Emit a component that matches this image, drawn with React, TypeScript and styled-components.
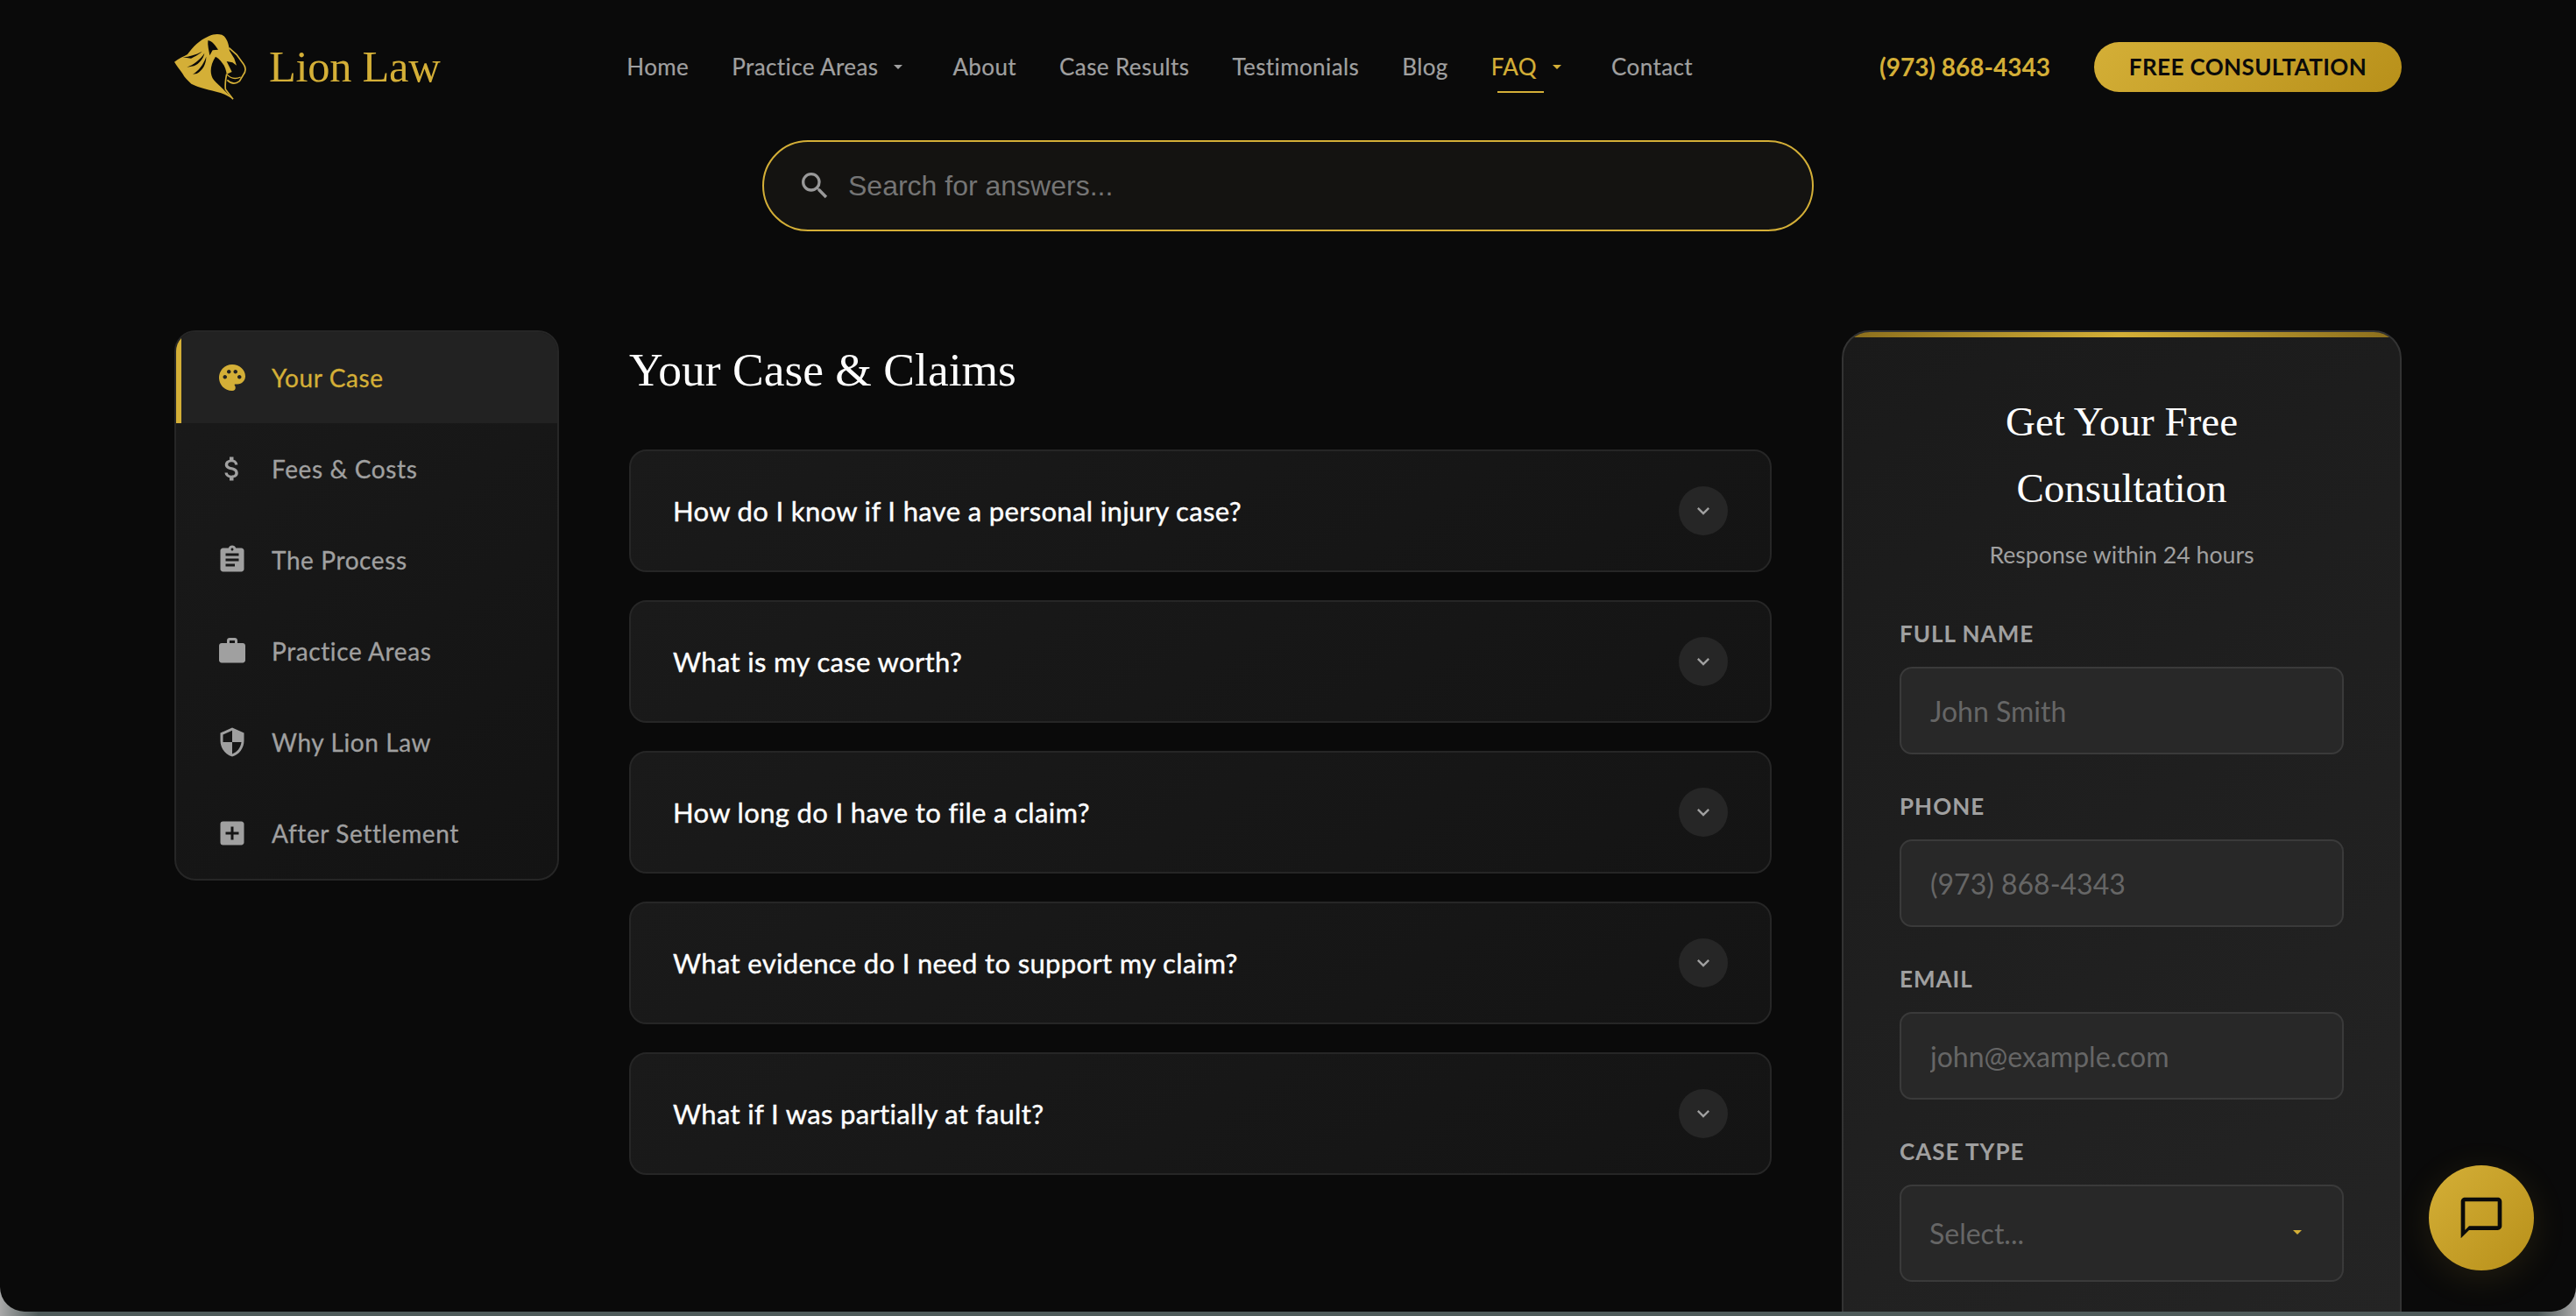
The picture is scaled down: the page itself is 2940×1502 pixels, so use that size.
import React from "react";
import styled, { createGlobalStyle } from "styled-components";
import {
    MdPalette,
    MdAttachMoney,
    MdAssignment,
    MdWork,
    MdSecurity,
    MdAddBox,
    MdSearch,
    MdExpandMore,
} from "react-icons/md";

const GOLD = "#d4af37";
const SANS = `Lato, "Noto Sans", sans-serif`;
const SERIF = `"Liberation Serif", serif`;

const navItems = [
    { label: "Home" },
    { label: "Practice Areas", caret: true },
    { label: "About" },
    { label: "Case Results" },
    { label: "Testimonials" },
    { label: "Blog" },
    { label: "FAQ", caret: true, active: true },
    { label: "Contact" },
];

const categories = [
    { label: "Your Case", icon: MdPalette, active: true },
    { label: "Fees & Costs", icon: MdAttachMoney },
    { label: "The Process", icon: MdAssignment },
    { label: "Practice Areas", icon: MdWork },
    { label: "Why Lion Law", icon: MdSecurity },
    { label: "After Settlement", icon: MdAddBox },
];

const questions = [
    "How do I know if I have a personal injury case?",
    "What is my case worth?",
    "How long do I have to file a claim?",
    "What evidence do I need to support my claim?",
    "What if I was partially at fault?",
];

const fields = [
    { label: "FULL NAME", placeholder: "John Smith" },
    { label: "PHONE", placeholder: "(973) 868-4343" },
    { label: "EMAIL", placeholder: "john@example.com" },
];

const LionLogo = () => (
    <svg width="82" height="76" viewBox="27 32 246 228" aria-hidden="true">
        {/* mane */}
        <path
            fill={GOLD}
            d="M27 130 C42 118 58 112 72 104 C90 80 112 56 145 42 C160 34 176 33 190 37 C206 46 213 66 216 92 L232 118 L240 142 L226 132 L206 128 L224 164 L206 172 C204 150 190 124 168 112 C150 140 146 170 162 192 C178 210 205 232 228 258 C212 248 198 240 185 236 C165 230 148 228 130 222 C112 216 98 212 85 205 C72 192 62 184 55 170 C44 154 34 142 27 130 Z"
        />
        {/* ear */}
        <path fill="#0a0a0a" d="M142 57 C152 56 162 66 177 88 L158 90 L148 108 C146 92 140 74 142 57 Z" />
        {/* mane slashes */}
        <path fill="#0a0a0a" d="M56 114 C78 112 100 106 122 94 C106 108 92 114 84 118 Z" />
        <path fill="#0a0a0a" d="M70 148 C92 140 116 122 130 100 C126 120 112 136 94 144 Z" />
        <path fill="#0a0a0a" d="M90 172 C110 160 126 140 136 112 C136 138 124 158 104 170 Z" />
        {/* snout and jaw lines */}
        <path
            fill="none"
            stroke={GOLD}
            strokeWidth="5"
            d="M214 82 L240 105 L264 138 C274 152 270 166 262 176 L250 196 C234 208 220 204 208 192"
        />
        <path fill="none" stroke={GOLD} strokeWidth="5" d="M206 172 C202 192 200 208 202 224 L228 258" />
        <path fill="none" stroke={GOLD} strokeWidth="4" d="M206 172 C220 188 236 190 254 182" />
    </svg>
);

const ChatIcon = () => (
    <svg width="56" height="56" viewBox="0 0 24 24" fill="#0a0a0a" aria-hidden="true">
        <path d="M20 2H4c-1.1 0-2 .9-2 2v18l4-4h14c1.1 0 2-.9 2-2V4c0-1.1-.9-2-2-2zm0 14H6l-2 2V4h16v12z" />
    </svg>
);

export default function App() {
    return (
        <>
            <GlobalStyle />
            <Screen>
                <Header>
                    <Logo>
                        <LionLogo />
                        <LogoText>Lion Law</LogoText>
                    </Logo>
                    <Nav>
                        {navItems.map((item) => (
                            <NavLink key={item.label} $active={item.active}>
                                {item.label}
                                {item.caret && <Caret />}
                            </NavLink>
                        ))}
                    </Nav>
                    <HeaderActions>
                        <Phone>(973) 868-4343</Phone>
                        <CtaButton>FREE CONSULTATION</CtaButton>
                    </HeaderActions>
                </Header>

                <SearchBar>
                    <MdSearch size={40} color="#999" />
                    <SearchInput placeholder="Search for answers..." />
                </SearchBar>

                <Content>
                    <Sidebar>
                        {categories.map(({ label, icon: Icon, active }) => (
                            <SidebarItem key={label} $active={active}>
                                <IconSlot>
                                    <Icon size={36} />
                                </IconSlot>
                                {label}
                            </SidebarItem>
                        ))}
                    </Sidebar>

                    <Main>
                        <Title>Your Case &amp; Claims</Title>
                        <Questions>
                            {questions.map((question) => (
                                <Question key={question}>
                                    {question}
                                    <Chevron>
                                        <MdExpandMore size={28} />
                                    </Chevron>
                                </Question>
                            ))}
                        </Questions>
                    </Main>

                    <FormCard>
                        <FormTitle>Get Your Free Consultation</FormTitle>
                        <FormNote>Response within 24 hours</FormNote>
                        {fields.map((field) => (
                            <Field key={field.label}>
                                <FieldLabel>{field.label}</FieldLabel>
                                <TextInput placeholder={field.placeholder} />
                            </Field>
                        ))}
                        <Field>
                            <FieldLabel>CASE TYPE</FieldLabel>
                            <SelectWrap>
                                <SelectBox defaultValue="">
                                    <option value="">Select...</option>
                                </SelectBox>
                                <SelectCaret />
                            </SelectWrap>
                        </Field>
                    </FormCard>
                </Content>

                <ChatButton aria-label="Chat">
                    <ChatIcon />
                </ChatButton>
            </Screen>
        </>
    );
}

const GlobalStyle = createGlobalStyle`
    * {
        box-sizing: border-box;
    }
    html, body {
        margin: 0;
        height: 100%;
        overflow: hidden;
        background: linear-gradient(90deg, #a8a8a8 0, #4f5b5a 44px, #4f5b5a 2896px, #a8a8a8 100%);
    }
`;

const Screen = styled.div`
    height: 1497px;
    padding: 0 199px;
    overflow: hidden;
    background: #0a0a0a;
    border-radius: 0 0 28px 28px;
    font-family: ${SANS};
`;

const Header = styled.header`
    height: 152px;
    display: flex;
    align-items: center;
    justify-content: space-between;
`;

const Logo = styled.div`
    display: flex;
    align-items: center;
    gap: 26px;
`;

const LogoText = styled.span`
    font-family: ${SERIF};
    font-size: 50.5px;
    letter-spacing: -0.3px;
    color: ${GOLD};
`;

const Nav = styled.nav`
    display: flex;
    align-items: center;
    gap: 49px;
`;

const NavLink = styled.a<{ $active?: boolean }>`
    position: relative;
    display: flex;
    align-items: center;
    gap: 18px;
    font-size: 26px;
    letter-spacing: 0.4px;
    -webkit-text-stroke: 0.2px currentColor;
    color: ${(p) => (p.$active ? GOLD : "#a0a0a0")};
    ${(p) =>
        p.$active &&
        `&::after {
            content: "";
            position: absolute;
            left: 7px;
            width: 53px;
            top: 44px;
            height: 2px;
            background: ${GOLD};
        }`}
`;

const Caret = styled.span`
    width: 0;
    height: 0;
    margin-right: 8px;
    border-left: 5px solid transparent;
    border-right: 5px solid transparent;
    border-top: 5px solid currentColor;
`;

const HeaderActions = styled.div`
    display: flex;
    align-items: center;
    gap: 50px;
`;

const Phone = styled.span`
    font-size: 28px;
    font-weight: 700;
    color: ${GOLD};
`;

const CtaButton = styled.button`
    width: 351px;
    height: 57px;
    border: 0;
    border-radius: 29px;
    background: linear-gradient(135deg, #d4af37, #b8901a);
    font-family: ${SANS};
    font-size: 26px;
    font-weight: 700;
    letter-spacing: 0.4px;
    color: #0a0a0a;
`;

const SearchBar = styled.div`
    width: 1200px;
    height: 104px;
    margin: 8px auto 0;
    padding: 0 38px;
    display: flex;
    align-items: center;
    gap: 16px;
    background: #141311;
    border: 2px solid ${GOLD};
    border-radius: 52px;
`;

const SearchInput = styled.input`
    flex: 1;
    border: 0;
    outline: 0;
    background: transparent;
    font-family: "Liberation Sans", sans-serif;
    font-size: 32px;
    color: #fff;
    &::placeholder {
        color: #757575;
    }
`;

const Content = styled.div`
    margin-top: 113px;
    display: grid;
    grid-template-columns: 439px 1fr 639px;
    column-gap: 80px;
    align-items: start;
`;

const Sidebar = styled.aside`
    overflow: hidden;
    background: linear-gradient(145deg, #1a1a1a, #131313);
    border: 2px solid #262626;
    border-radius: 24px;
`;

const SidebarItem = styled.div<{ $active?: boolean }>`
    height: 104px;
    padding-left: 40px;
    display: flex;
    align-items: center;
    gap: 27px;
    font-size: 28px;
    letter-spacing: 0.6px;
    -webkit-text-stroke: 0.3px currentColor;
    color: ${(p) => (p.$active ? GOLD : "#a0a0a0")};
    background: ${(p) => (p.$active ? "#222" : "transparent")};
    border-left: 6px solid ${(p) => (p.$active ? GOLD : "transparent")};
`;

const IconSlot = styled.span`
    width: 36px;
    display: flex;
    justify-content: center;
`;

const Main = styled.main`
    min-width: 0;
`;

const Title = styled.h2`
    margin: 0;
    height: 136px;
    padding-top: 8px;
    font-family: ${SERIF};
    font-size: 53.5px;
    font-weight: 400;
    line-height: 74px;
    color: #fff;
`;

const Questions = styled.div`
    display: flex;
    flex-direction: column;
    gap: 32px;
`;

const Question = styled.div`
    height: 140px;
    padding: 0 48px;
    display: flex;
    align-items: center;
    justify-content: space-between;
    background: linear-gradient(145deg, #1a1a1a, #141414);
    border: 2px solid #262626;
    border-radius: 20px;
    font-size: 31px;
    letter-spacing: 0.35px;
    -webkit-text-stroke: 0.4px currentColor;
    color: #fff;
`;

const Chevron = styled.span`
    width: 56px;
    height: 56px;
    display: flex;
    align-items: center;
    justify-content: center;
    border-radius: 50%;
    background: #262626;
    color: #a0a0a0;
    -webkit-text-stroke: 0;
`;

const FormCard = styled.aside`
    position: relative;
    padding: 64px 64px 0;
    overflow: hidden;
    background: linear-gradient(145deg, #1a1a1a, #242424);
    border: 2px solid #333;
    border-radius: 32px 32px 0 0;
    &::before {
        content: "";
        position: absolute;
        inset: 0 0 auto;
        height: 6px;
        background: linear-gradient(90deg, #8a6d1c, ${GOLD} 50%, #8a6d1c);
    }
`;

const FormTitle = styled.h3`
    margin: 0 auto;
    width: 340px;
    font-family: ${SERIF};
    font-size: 47px;
    font-weight: 400;
    line-height: 76px;
    text-align: center;
    color: #fff;
`;

const FormNote = styled.p`
    margin: 16px 0 48px;
    font-size: 26.7px;
    line-height: 44px;
    text-align: center;
    color: #a0a0a0;
`;

const Field = styled.div`
    margin-bottom: 39px;
`;

const FieldLabel = styled.label`
    display: block;
    margin-bottom: 18px;
    font-size: 26px;
    font-weight: 700;
    line-height: 40px;
    letter-spacing: 1px;
    color: #a0a0a0;
`;

const TextInput = styled.input`
    display: block;
    width: 100%;
    height: 100px;
    padding: 0 33px;
    outline: 0;
    background: #282828;
    border: 2px solid #3a3a3a;
    border-radius: 14px;
    font-family: ${SANS};
    font-size: 32px;
    color: #fff;
    &::placeholder {
        color: #666;
    }
`;

const SelectWrap = styled.div`
    position: relative;
`;

const SelectBox = styled.select`
    display: block;
    width: 100%;
    height: 111px;
    padding: 0 32px;
    outline: 0;
    appearance: none;
    background: #282828;
    border: 2px solid #3a3a3a;
    border-radius: 14px;
    font-family: ${SANS};
    font-size: 32px;
    color: #666;
`;

const SelectCaret = styled.span`
    position: absolute;
    right: 48px;
    top: 52px;
    width: 0;
    height: 0;
    border-left: 5px solid transparent;
    border-right: 5px solid transparent;
    border-top: 5px solid ${GOLD};
`;

const ChatButton = styled.button`
    position: fixed;
    right: 48px;
    bottom: 52px;
    width: 120px;
    height: 120px;
    padding: 0;
    display: flex;
    align-items: center;
    justify-content: center;
    border: 0;
    border-radius: 50%;
    background: linear-gradient(135deg, #d4af37, #b8901a);
    box-shadow: 0 8px 40px rgba(212, 175, 55, 0.12);
`;
